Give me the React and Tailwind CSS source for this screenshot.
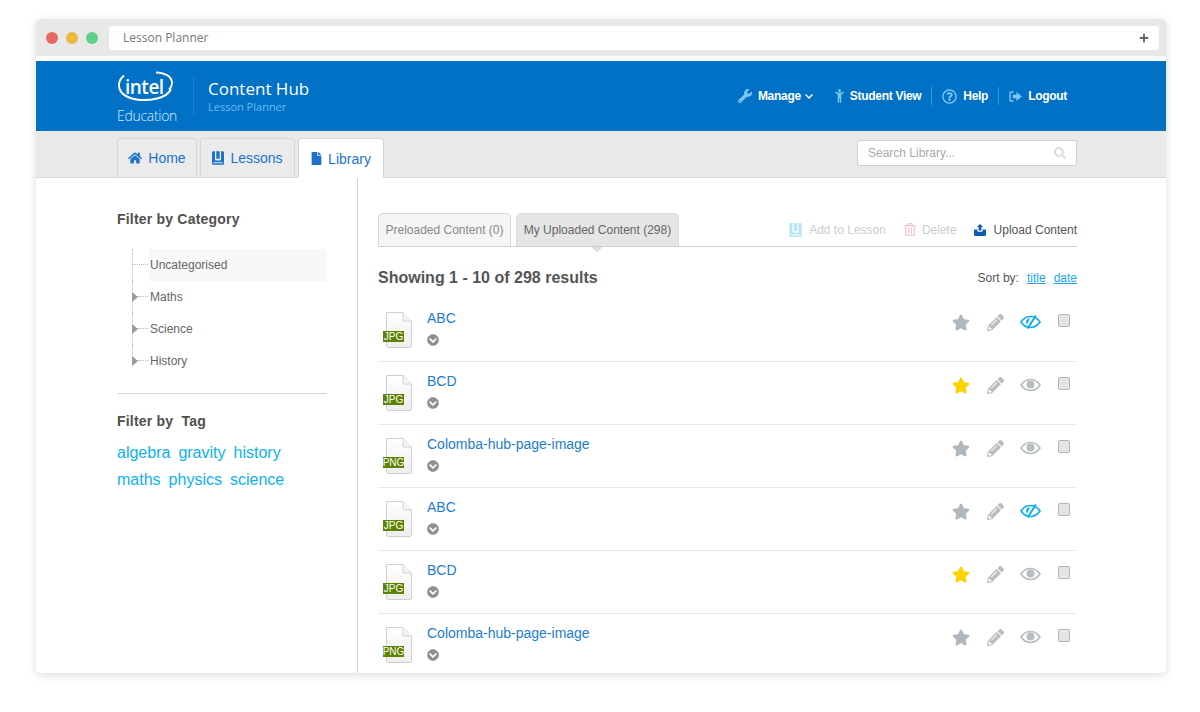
import React from "react";
import { FaHome, FaFile, FaWrench, FaChevronDown, FaRegQuestionCircle, FaSearch, FaStar, FaPencilAlt, FaChevronCircleDown, FaRegTrashAlt, FaPlus } from "react-icons/fa";

const BookIcon = ({ className }) => (
  <svg viewBox="0 0 14 16" className={className} fill="currentColor">
    <path d="M1.5 0H3.5V9.5C3.5 10.5 4.2 11 5 11H9C9.8 11 10.5 10.5 10.5 9.5V0H12.5C13.3 0 14 .7 14 1.5V14.5C14 15.3 13.3 16 12.5 16H1.5C.7 16 0 15.3 0 14.5V1.5C0 .7 .7 0 1.5 0ZM1.5 13V14.2H12.5V13Z" fillRule="evenodd" />
    <path d="M5 0H9V9H5Z" />
  </svg>
);

const UploadIcon = ({ className }) => (
  <svg viewBox="0 0 14 14" className={className} fill="currentColor">
    <path d="M7 0L10.6 3.6H8.6V7.5H5.4V3.6H3.4Z" />
    <path d="M0 7.5C0 6.9.4 6.5 1 6.5H4V8.5C4 8.9 4.3 9 4.6 9H9.4C9.7 9 10 8.9 10 8.5V6.5H13C13.6 6.5 14 6.9 14 7.5V12.5C14 13.3 13.3 14 12.5 14H1.5C.7 14 0 13.3 0 12.5Z" />
  </svg>
);

const StudentIcon = ({ className }) => (
  <svg viewBox="0 0 10 15" className={className} fill="currentColor">
    <circle cx="5" cy="1.6" r="1.6" />
    <path d="M0 3.2L1 2.6L3.4 4H6.6L9 2.6L10 3.2L7 6V15H5.4V10H4.6V15H3V6Z" />
  </svg>
);

const LogoutIcon = ({ className }) => (
  <svg viewBox="0 0 14 12" className={className} fill="currentColor">
    <path d="M5 1H2.2C1.5 1 1 1.5 1 2.2V9.8C1 10.5 1.5 11 2.2 11H5" fill="none" stroke="currentColor" strokeWidth="1.6" />
    <path d="M8 1.2L14 6L8 10.8V8H4V4H8Z" />
  </svg>
);

const EyeIcon = ({ slash, className }) => (
  <svg viewBox="0 0 21 14" className={className} fill="none" stroke="currentColor">
    <path d="M1 7C3.5 3.4 6.8 1.5 10.5 1.5S17.500 3.400 20 7C17.500 10.600 14.200 12.500 10.500 12.500S3.500 10.600 1 7Z" strokeWidth="1.7" />
    {slash ? (
      <>
        <path d="M6 6.500C6 4.500 8 3.200 10 3.200L6.800 10Z" fill="currentColor" stroke="none" />
        <path d="M16 0.500L7.500 13.500" strokeWidth="2" />
      </>
    ) : (
      <circle cx="10.500" cy="6.500" r="4" fill="currentColor" stroke="none" />
    )}
  </svg>
);

const FileIcon = ({ type }) => (
  <div className="relative h-[36px] w-[29px] shrink-0">
    <svg viewBox="0 0 26 36" className="absolute left-[3px] top-0 h-[36px] w-[26px]">
      <defs>
        <linearGradient id="doc" x1="0" y1="0" x2="0" y2="1">
          <stop offset="0" stopColor="#ffffff" />
          <stop offset="1" stopColor="#eeeeee" />
        </linearGradient>
      </defs>
      <path d="M.5 .5H17L25.500 9V34C25.500 34.800 24.800 35.500 24 35.500H2C1.200 35.500 .5 34.800 .5 34Z" fill="url(#doc)" stroke="#cfcfcf" />
      <path d="M17 .5V9H25.500" fill="#f4f4f4" stroke="#d4d4d4" />
    </svg>
    <span className="absolute left-0 top-[19px] flex h-[11px] w-[21px] items-center justify-center bg-[#5b8200] text-[10px] leading-none text-white">{type}</span>
  </div>
);

const rows = [
  ["ABC", "JPG", false, true],
  ["BCD", "JPG", true, false],
  ["Colomba-hub-page-image", "PNG", false, false],
  ["ABC", "JPG", false, true],
  ["BCD", "JPG", true, false],
  ["Colomba-hub-page-image", "PNG", false, false],
];

const NavDivider = () => <span className="mx-[10px] h-[18px] w-px bg-[#2a9fe0]" />;

const TreeRow = ({ label, active, arrow, last }) => (
  <div className="relative h-[32px] pl-[32px]">
    <span className={`absolute left-[15px] top-0 w-0 border-l border-dotted border-[#bbbbbb] ${last ? "h-[16px]" : "h-[32px]"}`} />
    <span className={`absolute top-[15px] h-0 border-t border-dotted border-[#bbbbbb] ${arrow ? "left-[21px] w-[10px]" : "left-[15px] w-[16px]"}`} />
    {arrow && <span className="absolute left-[15px] top-[11px] h-0 w-0 border-y-[5px] border-l-[6px] border-y-transparent border-l-[#999999]" />}
    <div className={`flex h-full items-center pl-px text-xs text-[#666666] ${active ? "bg-[#f8f8f8]" : ""}`}>{label}</div>
  </div>
);

const Tab = ({ icon, label, active, wClass }) => (
  <div className={`flex h-[39px] items-center justify-center gap-[6px] rounded-t-[4px] border border-b-0 border-[#d6d6d6] text-sm text-[#1c73c9] ${wClass} ${active ? "relative z-10 mb-[-1px] h-[40px] bg-white" : "bg-[#ebebeb]"}`}>
    {icon}
    {label}
  </div>
);

export default function App() {
  return (
    <div className="h-[712px] w-[1200px] overflow-hidden bg-white pl-[36px] pt-[19px] font-['Liberation_Sans',Arial,sans-serif]">
      <div className="flex h-[654px] w-[1130px] flex-col overflow-hidden rounded-[5px] bg-white shadow-[0_2px_10px_rgba(0,0,0,0.14)]">
        <div className="h-[37px] shrink-0 bg-[#e8e8e8] pl-[10px] pr-[7px] pt-[7px]">
          <div className="flex h-[24px] items-center">
            <span className="h-[12px] w-[12px] rounded-full bg-[#e7685f]" />
            <span className="ml-[8px] h-[12px] w-[12px] rounded-full bg-[#eaba41]" />
            <span className="ml-[8px] h-[12px] w-[12px] rounded-full bg-[#5fd08a]" />
            <div className="ml-[11px] flex h-[24px] flex-1 items-center justify-between rounded-[3px] bg-white pl-[14px] pr-[10px] font-['Open_Sans',sans-serif] text-xs text-[#777777]">
              Lesson Planner
              <FaPlus className="h-[10px] w-[10px] text-[#666666]" />
            </div>
          </div>
        </div>
        <div className="h-[5px] shrink-0 bg-white" />

        <header className="flex h-[70px] shrink-0 items-center justify-between bg-[#0071c5] pl-[81px] pr-[99px] text-white">
          <div className="flex items-center">
            <div className="relative flex h-[70px] w-[62px] flex-col items-start">
              <svg viewBox="0 0 56 34" className="mt-[10px] h-[34px] w-[56px]" fill="none" stroke="#ffffff">
                <path d="M7 4.500C1.500 9 0 16 5 22C11 28.500 26 31 40 27.500C47 25.800 52 22.500 54 18" strokeWidth="2" />
                <path d="M39 1.500C47 2 54 5 55 11C55.300 14 54 16.500 52 18.500" strokeWidth="1.800" />
              </svg>
              <span className="absolute left-[8px] top-[14px] font-['Open_Sans',sans-serif] text-[19px] font-semibold leading-[24px] tracking-[-0.5px] text-white">intel</span>
              <span className="absolute left-0 top-[46px] font-['Open_Sans',sans-serif] text-[14px] font-light leading-[18px] tracking-[-0.3px] text-[#dcecf8]">Education</span>
            </div>
            <span className="ml-[14px] h-[40px] w-px bg-[#1a80cc]" />
            <div className="ml-[14px] flex flex-col font-['Open_Sans',sans-serif]">
              <span className="text-[17px] leading-[22px]">Content Hub</span>
              <span className="text-[11px] leading-[14px] text-[#6cbcf0]">Lesson Planner</span>
            </div>
          </div>
          <nav className="flex items-center text-xs font-bold tracking-[-0.3px]">
            <FaWrench className="mr-[6px] h-[14px] w-[14px] text-[#7cc6f2]" />
            Manage
            <FaChevronDown className="ml-[3px] h-[9px] w-[10px]" />
            <span className="ml-[1px]"><NavDivider /></span>
            <StudentIcon className="mr-[6px] h-[14px] w-[9px] text-[#7cc6f2]" />
            Student View
            <NavDivider />
            <FaRegQuestionCircle className="mr-[6px] h-[15px] w-[15px] text-[#7cc6f2]" />
            Help
            <NavDivider />
            <LogoutIcon className="mr-[6px] h-[11px] w-[13px] text-[#7cc6f2]" />
            Logout
          </nav>
        </header>

        <div className="flex h-[47px] shrink-0 items-end justify-between border-b border-[#d9d9d9] bg-[#e9e9e9] pl-[81px] pr-[89px]">
          <div className="flex items-end gap-[3px]">
            <Tab wClass="w-[80px]" label="Home" icon={<FaHome className="h-[14px] w-[14px]" />} />
            <Tab wClass="w-[95px]" label="Lessons" icon={<BookIcon className="h-[14px] w-[12px]" />} />
            <Tab wClass="w-[86px]" active label="Library" icon={<FaFile className="h-[13px] w-[11px]" />} />
          </div>
          <div className="mb-[11px] flex h-[26px] w-[220px] items-center justify-between rounded-[3px] border border-[#cfcfcf] bg-white pl-[10px] pr-[10px] text-xs text-[#aaaaaa]">
            Search Library...
            <FaSearch className="h-[12px] w-[12px] text-[#dddddd]" />
          </div>
        </div>

        <div className="flex min-h-0 flex-1">
          <aside className="w-[322px] shrink-0 border-r border-[#d4d4d4] pl-[81px] pr-[30px] pt-[33px]">
            <h3 className="text-sm font-bold leading-[16px] tracking-[0.2px] text-[#4f4f4f]">Filter by Category</h3>
            <div className="mt-[22px]">
              <TreeRow label="Uncategorised" active />
              <TreeRow label="Maths" arrow />
              <TreeRow label="Science" arrow />
              <TreeRow label="History" arrow last />
            </div>
            <div className="mt-[16px] border-t border-[#d6d6d6]" />
            <h3 className="mt-[19px] text-sm font-bold leading-[16px] tracking-[0.2px] text-[#4f4f4f]">Filter by&nbsp; Tag</h3>
            <div className="mt-[10px] flex gap-[8px] text-base leading-[27px] text-[#0db1f0]">
              <span>algebra</span><span>gravity</span><span>history</span>
            </div>
            <div className="flex gap-[8px] text-base leading-[27px] text-[#0db1f0]">
              <span>maths</span><span>physics</span><span>science</span>
            </div>
          </aside>

          <main className="min-w-0 flex-1 overflow-hidden pl-[20px] pr-[89px] pt-[35px]">
            <div className="relative flex h-[34px] items-end border-b border-[#d0d0d0] text-xs">
              <div className="flex h-[33px] w-[133px] items-center justify-center rounded-t-[5px] border border-b-0 border-[#d6d6d6] bg-[#f5f5f5] text-[#888888]">Preloaded Content (0)</div>
              <div className="relative ml-[5px] flex h-[33px] w-[163px] items-center justify-center rounded-t-[5px] border border-b-0 border-[#dcdcdc] bg-[#e5e5e5] text-[#666666]">
                My Uploaded Content (298)
                <span className="absolute left-[74px] top-[33px] h-0 w-0 border-x-[6px] border-t-[5px] border-x-transparent border-t-[#dddddd]" />
              </div>
              <div className="ml-auto flex h-[33px] items-center">
                <BookIcon className="h-[14px] w-[13px] text-[#b5e3f9]" />
                <span className="ml-[7px] text-[#cccccc]">Add to Lesson</span>
                <FaRegTrashAlt className="ml-[18px] h-[13px] w-[12px] text-[#f9c4ca]" />
                <span className="ml-[6px] text-[#cccccc]">Delete</span>
                <UploadIcon className="ml-[17px] h-[12px] w-[12px] text-[#0d5bb5]" />
                <span className="ml-[8px] text-[#555555]">Upload Content</span>
              </div>
            </div>

            <div className="mt-[20px] flex h-[21px] items-center justify-between">
              <span className="text-base font-bold text-[#555555]">Showing 1 - 10 of 298 results</span>
              <span className="text-xs text-[#555555]">
                Sort by:
                <span className="ml-[8px] text-[#1da5e8] underline">title</span>
                <span className="ml-[8px] text-[#1da5e8] underline">date</span>
              </span>
            </div>

            <div className="mt-[11px]">
              {rows.map(([title, type, starred, hidden], i) => (
                <div key={i} className="flex h-[63px] border-b border-[#e8e8e8] pt-[10px]">
                  <div className="mt-[3px] ml-[5px]"><FileIcon type={type} /></div>
                  <div className="ml-[15px] flex flex-col">
                    <span className="text-sm leading-[18px] text-[#1c7dd0]">{title}</span>
                    <FaChevronCircleDown className="mt-[7px] h-[12px] w-[12px] text-[#8f8f8f]" />
                  </div>
                  <div className="ml-auto flex h-[26px] items-center pr-[7px]">
                    <FaStar className={`h-[17px] w-[18px] ${starred ? "text-[#ffd200]" : "text-[#b0b8bd]"}`} />
                    <FaPencilAlt className="ml-[17px] h-[17px] w-[17px] text-[#b8bdc0]" />
                    <EyeIcon slash={hidden} className={`ml-[16px] h-[14px] w-[21px] ${hidden ? "text-[#12aeef]" : "text-[#b8bdc0]"}`} />
                    <span className="ml-[17px] mb-[3px] h-[13px] w-[12px] rounded-[2px] border border-[#b5b5b5] bg-[#e4e4e4]" />
                  </div>
                </div>
              ))}
            </div>
          </main>
        </div>
      </div>
    </div>
  );
}
